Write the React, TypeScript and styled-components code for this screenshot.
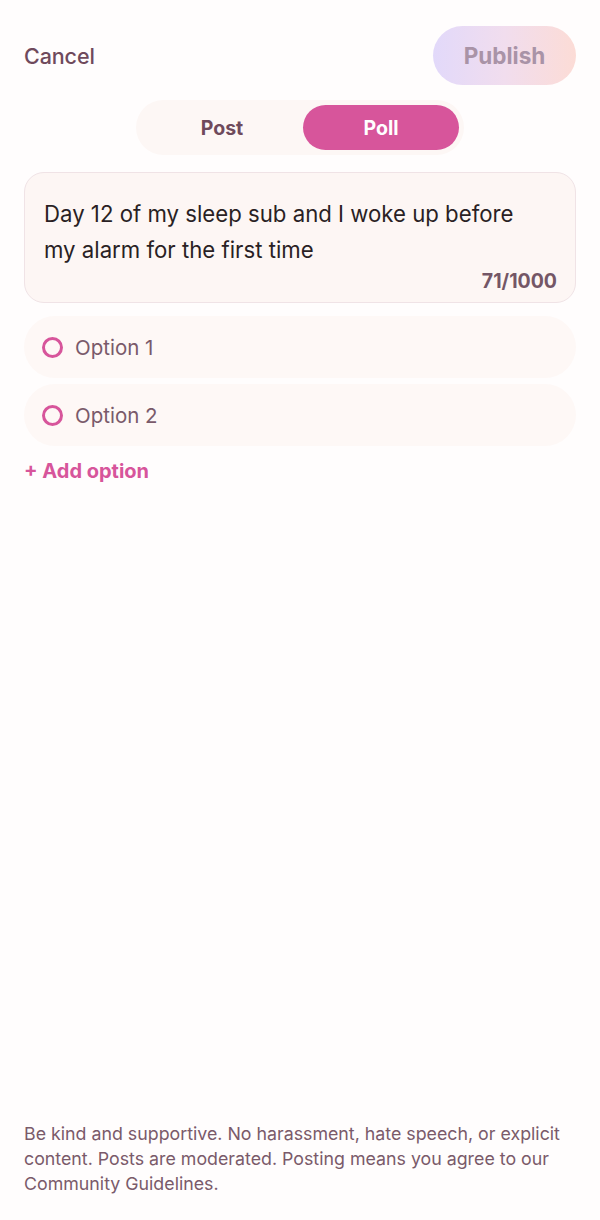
import { useState } from "react"
import styled, { createGlobalStyle } from "styled-components"

const GlobalStyle = createGlobalStyle`
  html, body {
    margin: 0;
    padding: 0;
    background: #fffdfd;
  }
  body {
    font-family: "Inter", "Roboto", "Liberation Sans", sans-serif;
    -webkit-font-smoothing: antialiased;
  }
`

type Mode = "post" | "poll"

export default function App() {
  const [mode, setMode] = useState<Mode>("poll")
  const [options, setOptions] = useState<string[]>(["Option 1", "Option 2"])
  const body = "Day 12 of my sleep sub and I woke up before my alarm for the first time"

  return (
    <Screen>
      <GlobalStyle />
      <TopBar>
        <CancelButton type="button">Cancel</CancelButton>
        <PublishButton type="button" disabled>
          Publish
        </PublishButton>
      </TopBar>

      <SegmentWrap>
        <Segment>
          <SegmentItem $active={mode === "post"} onClick={() => setMode("post")}>
            Post
          </SegmentItem>
          <SegmentItem $active={mode === "poll"} onClick={() => setMode("poll")}>
            Poll
          </SegmentItem>
        </Segment>
      </SegmentWrap>

      <Composer>
        <ComposerText>{body}</ComposerText>
        <Counter>{body.length}/1000</Counter>
      </Composer>

      <OptionList>
        {options.map(label => (
          <OptionRow key={label}>
            <Radio />
            <OptionLabel>{label}</OptionLabel>
          </OptionRow>
        ))}
      </OptionList>

      <AddOption
        type="button"
        onClick={() => setOptions(prev => [...prev, `Option ${prev.length + 1}`])}
      >
        + Add option
      </AddOption>

      <Footer>
        Be kind and supportive. No harassment, hate speech, or explicit content. Posts are
        moderated. Posting means you agree to our Community Guidelines.
      </Footer>
    </Screen>
  )
}

const Screen = styled.div`
  min-height: 1220px;
  box-sizing: border-box;
  display: flex;
  flex-direction: column;
  padding: 26px 24px 24px;
  background: #fffdfd;
`

const TopBar = styled.header`
  display: flex;
  align-items: center;
  justify-content: space-between;
`

const CancelButton = styled.button`
  border: none;
  background: none;
  padding: 0;
  font-family: inherit;
  font-size: 21.5px;
  font-weight: 500;
  letter-spacing: -0.1px;
  color: #6f4a5c;
`

const PublishButton = styled.button`
  width: 143px;
  height: 59px;
  border: none;
  border-radius: 30px;
  background: linear-gradient(90deg, #e2d9fa 0%, #f1ddee 50%, #fcdcd6 100%);
  font-family: inherit;
  font-size: 22.5px;
  font-weight: 700;
  color: #a993a7;
`

const SegmentWrap = styled.div`
  display: flex;
  justify-content: center;
  margin-top: 15px;
`

const Segment = styled.div`
  display: grid;
  grid-template-columns: 162px 156px;
  width: 328px;
  box-sizing: border-box;
  padding: 5px;
  border-radius: 28px;
  background: #fdf7f5;
`

const SegmentItem = styled.button<{ $active: boolean }>`
  height: 45px;
  border: none;
  border-radius: 23px;
  padding: 0;
  font-family: inherit;
  font-size: 19.5px;
  font-weight: 700;
  background: ${p => (p.$active ? "#d7559b" : "transparent")};
  color: ${p => (p.$active ? "#ffffff" : "#6f4a5c")};
`

const Composer = styled.div`
  margin-top: 17px;
  display: flex;
  flex-direction: column;
  padding: 23px 18px 9px 19px;
  border: 1px solid #f0e3e6;
  border-radius: 20px;
  background: #fdf6f4;
`

const ComposerText = styled.p`
  margin: 0;
  padding-right: 22px;
  font-size: 22.2px;
  line-height: 36px;
  color: #2a1f24;
`

const Counter = styled.span`
  align-self: flex-end;
  margin-top: 1px;
  font-size: 19.5px;
  font-weight: 700;
  color: #745666;
`

const OptionList = styled.div`
  margin-top: 13px;
  display: flex;
  flex-direction: column;
  gap: 6px;
`

const OptionRow = styled.div`
  display: flex;
  align-items: center;
  gap: 12px;
  height: 62px;
  padding: 0 18px;
  border-radius: 31px;
  background: #fef8f6;
`

const Radio = styled.span`
  width: 15px;
  height: 15px;
  border-radius: 50%;
  border: 3px solid #d7559b;
  flex-shrink: 0;
`

const OptionLabel = styled.span`
  font-size: 20.5px;
  color: #7a5a6a;
`

const AddOption = styled.button`
  align-self: flex-start;
  margin-top: 13px;
  border: none;
  background: none;
  padding: 0;
  font-family: inherit;
  font-size: 20px;
  font-weight: 700;
  color: #d7559b;
`

const Footer = styled.p`
  margin: auto 0 0;
  font-size: 17.8px;
  line-height: 25px;
  color: #7a5a6a;
`
